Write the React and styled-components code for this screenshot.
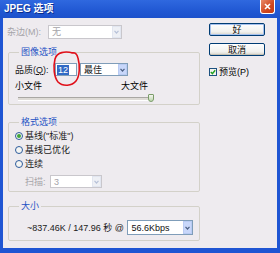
import React from "react";
import styled, { createGlobalStyle } from "styled-components";

const GlobalStyle = createGlobalStyle`
  html, body { margin: 0; padding: 0; background: #fff; }
  body {
    font-family: "Liberation Sans", "Noto Sans CJK SC", sans-serif;
    font-size: 9px;
  }
`;

const Window = styled.div`
  position: relative;
  width: 280px;
  height: 253px;
  display: flex;
  flex-direction: column;
  background: #1f55d3;
  overflow: hidden;
`;

const TitleBar = styled.div`
  height: 18px;
  flex: none;
  display: flex;
  align-items: flex-start;
  justify-content: space-between;
  padding: 0 5px 0 4px;
  background: linear-gradient(#2f68df, #2158d3 60%, #1c51cb);
`;

const Title = styled.div`
  color: #fff;
  font-weight: bold;
  font-size: 10px;
  line-height: 17px;
  text-shadow: 1px 1px 0 #0a2c8c;
`;

const CloseBtn = styled.div`
  width: 13px;
  height: 13px;
  border: 1px solid #fff;
  border-top: none;
  border-radius: 0 0 3px 3px;
  background: linear-gradient(135deg, #e88a6a, #d0461d 60%, #c23a14);
  display: flex;
  align-items: center;
  justify-content: center;
`;

const Body = styled.div`
  flex: 1;
  margin: 0 3px 5px 3px;
  background: #eeebef;
  display: flex;
  padding: 0 0 0 4px;
`;

const LeftCol = styled.div`
  width: 193px;
  display: flex;
  flex-direction: column;
`;

const RightCol = styled.div`
  margin-left: 9px;
  width: 56px;
  display: flex;
  flex-direction: column;
  padding-top: 5px;
`;

const Row = styled.div`
  display: flex;
  align-items: center;
  height: ${({ h }) => h || 13}px;
  margin-top: ${({ mt }) => mt || 0}px;
  padding-left: ${({ pl }) => pl || 0}px;
`;

const Label = styled.span`
  width: ${({ w }) => (w ? `${w}px` : "auto")};
  color: ${({ disabled }) => (disabled ? "#a5a3a8" : "#1a1a1a")};
  white-space: nowrap;
  line-height: 10px;
`;

const SelectBox = styled.div`
  width: ${({ w }) => w}px;
  height: ${({ h }) => h || 13}px;
  box-sizing: border-box;
  border: 1px solid ${({ disabled }) => (disabled ? "#c9c7cc" : "#7f9db9")};
  background: #fff;
  display: flex;
  align-items: center;
  margin-left: ${({ ml }) => ml || 0}px;
`;

const SelectText = styled.span`
  flex: 1;
  padding-left: 3px;
  color: ${({ disabled }) => (disabled ? "#a5a3a8" : "#111")};
  line-height: 10px;
`;

const Arrow = styled.div`
  width: 9px;
  height: 100%;
  box-sizing: border-box;
  margin: 0;
  border: 1px solid ${({ disabled }) => (disabled ? "#e2e6f0" : "#b9cbf3")};
  background: ${({ disabled }) => (disabled ? "#eef0f5" : "#c8d7fa")};
  display: flex;
  align-items: center;
  justify-content: center;
`;

const Chevron = ({ disabled }) => (
  <svg width="5" height="4" viewBox="0 0 5 4">
    <path d="M0.5 0.8 L2.5 3 L4.5 0.8" fill="none" stroke={disabled ? "#b8c2d8" : "#4d6185"} strokeWidth="1.2" />
  </svg>
);

const Select = ({ w, h, ml, value, disabled }) => (
  <SelectBox w={w} h={h} ml={ml} disabled={disabled}>
    <SelectText disabled={disabled}>{value}</SelectText>
    <Arrow disabled={disabled}>
      <Chevron disabled={disabled} />
    </Arrow>
  </SelectBox>
);

const Group = styled.fieldset`
  margin: ${({ mt }) => mt}px 0 0 1px;
  padding: 0 6px ${({ pb }) => pb || 0}px 6px;
  border: 1px solid #d3d1c9;
  border-radius: 2px;
  min-width: 0;
  height: ${({ h }) => h}px;
  box-sizing: border-box;
`;

const Legend = styled.legend`
  margin-left: 4px;
  padding: 0 2px;
  color: #2452c4;
  line-height: 10px;
`;

const QualityInput = styled.div`
  position: relative;
  width: 22px;
  height: 13px;
  box-sizing: border-box;
  border: 1px solid #7f9db9;
  background: #fff;
  display: flex;
  align-items: center;
  padding-left: 1px;
`;

const Selected = styled.span`
  background: #316ac5;
  color: #fff;
  line-height: 10px;
  padding: 0 1px;
`;

const RedMark = styled.svg`
  position: absolute;
  left: -3px;
  top: -13px;
  overflow: visible;
`;

const SizeLabels = styled.div`
  display: flex;
  justify-content: space-between;
  width: 133px;
  margin-top: 5px;
  line-height: 10px;
`;

const Slider = styled.div`
  position: relative;
  width: 136px;
  height: 8px;
  margin: 3px 0 0 3px;
`;

const Track = styled.div`
  position: absolute;
  left: 0;
  right: 0;
  top: 3px;
  height: 2px;
  border-top: 1px solid #a9a7a3;
  border-bottom: 1px solid #fff;
  background: #dedbd6;
`;

const Thumb = styled.div`
  position: absolute;
  right: 0;
  top: 0;
  width: 6px;
  height: 8px;
  box-sizing: border-box;
  border: 1px solid #7b9c6a;
  border-radius: 1px 1px 3px 3px;
  background: linear-gradient(#f4f4ef, #bcd8ad);
`;

const RadioCircle = styled.span`
  width: 8px;
  height: 8px;
  box-sizing: border-box;
  border-radius: 50%;
  border: 1px solid #2c5b9c;
  background: #f5f5f2;
  margin-right: 2px;
  display: flex;
  align-items: center;
  justify-content: center;
  &::after {
    content: "";
    width: 4px;
    height: 4px;
    border-radius: 50%;
    background: ${({ checked }) => (checked ? "#3fa53a" : "transparent")};
  }
`;

const Button = styled.div`
  height: 13px;
  box-sizing: border-box;
  margin-top: ${({ mt }) => mt || 0}px;
  border: 1px solid #003c74;
  border-radius: 2px;
  background: linear-gradient(#fefefe, #f1f1ee 70%, #d6d2c8);
  box-shadow: ${({ primary }) => (primary ? "inset 0 0 0 1px #a6c1ee" : "inset 0 -1px 0 #c5c1b4")};
  display: flex;
  align-items: center;
  justify-content: center;
  line-height: 10px;
  color: #111;
`;

const CheckRow = styled.div`
  display: flex;
  align-items: center;
  margin-top: 11px;
  line-height: 10px;
`;

const CheckBox = styled.span`
  width: 8px;
  height: 8px;
  box-sizing: border-box;
  border: 1px solid #1c5180;
  background: #f3f3ef;
  margin-right: 2px;
  display: flex;
  align-items: center;
  justify-content: center;
`;

const Radio = ({ checked, children, mt }) => (
  <Row h={10} mt={mt}>
    <RadioCircle checked={checked} />
    <Label>{children}</Label>
  </Row>
);

export default function App() {
  return (
    <>
      <GlobalStyle />
      <Window>
        <TitleBar>
          <Title>JPEG 选项</Title>
          <CloseBtn>
            <svg width="7" height="7" viewBox="0 0 7 7">
              <path d="M1 1 L6 6 M6 1 L1 6" stroke="#fff" strokeWidth="1.6" />
            </svg>
          </CloseBtn>
        </TitleBar>
        <Body>
          <LeftCol>
            <Row h={14} mt={7}>
              <Label w={41} disabled>杂边(M):</Label>
              <Select w={74} h={14} value="无" disabled />
            </Row>

            <Group mt={8} h={58}>
              <Legend>图像选项</Legend>
              <Row mt={6}>
                <Label w={40}>品质(<u>Q</u>):</Label>
                <QualityInput>
                  <Selected>12</Selected>
                  <RedMark width="30" height="36" viewBox="0 0 30 36">
                    <path
                      d="M20 2 C12 0 4 1 2 8 C0 16 1 26 5 31 C10 36 19 35 23 30 C27 25 27 14 25 7 C24 3 22 1 19 2"
                      fill="none"
                      stroke="#e0101a"
                      strokeWidth="1.6"
                      strokeLinecap="round"
                    />
                  </RedMark>
                </QualityInput>
                <Select w={48} ml={3} value="最佳" />
              </Row>
              <SizeLabels>
                <span>小文件</span>
                <span>大文件</span>
              </SizeLabels>
              <Slider>
                <Track />
                <Thumb />
              </Slider>
            </Group>

            <Group mt={12} h={75}>
              <Legend>格式选项</Legend>
              <Radio checked mt={4}>基线("标准")</Radio>
              <Radio mt={4}>基线已优化</Radio>
              <Radio mt={4}>连续</Radio>
              <Row mt={6} pl={10}>
                <Label w={25} disabled>扫描:</Label>
                <Select w={52} value="3" disabled />
              </Row>
            </Group>

            <Group mt={9} h={40}>
              <Legend>大小</Legend>
              <Row h={15} mt={9} pl={12}>
                <Label w={101}>~837.46K / 147.96 秒 @</Label>
                <Select w={66} h={15} value="56.6Kbps" />
              </Row>
            </Group>
          </LeftCol>

          <RightCol>
            <Button primary>好</Button>
            <Button mt={7}>取消</Button>
            <CheckRow>
              <CheckBox>
                <svg width="6" height="6" viewBox="0 0 6 6">
                  <path d="M0.8 3 L2.4 4.6 L5.2 1.2" fill="none" stroke="#21a121" strokeWidth="1.4" />
                </svg>
              </CheckBox>
              <span>预览(P)</span>
            </CheckRow>
          </RightCol>
        </Body>
      </Window>
    </>
  );
}
